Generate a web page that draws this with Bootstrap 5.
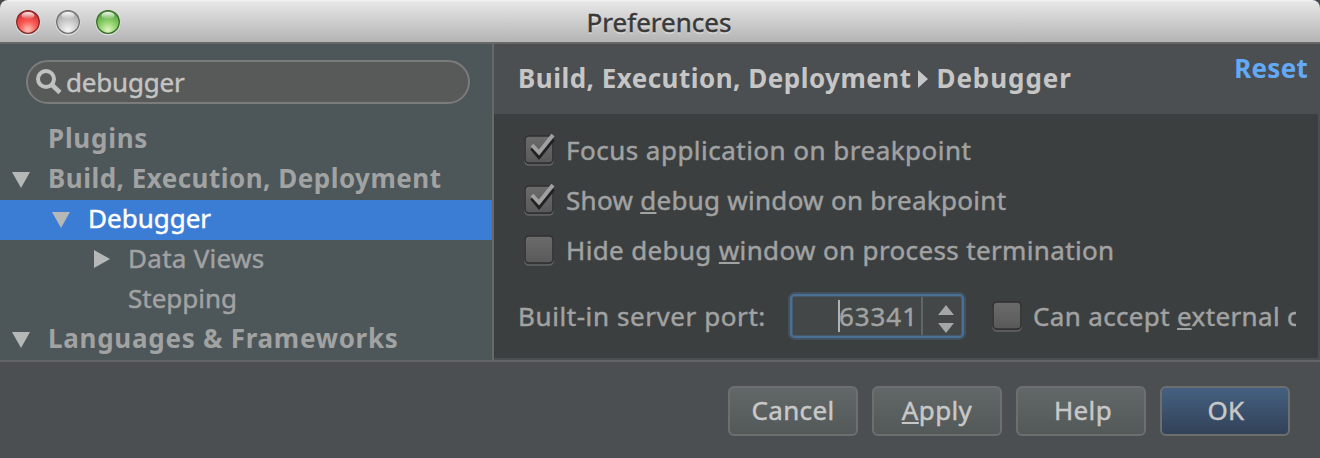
<!DOCTYPE html>
<html lang="en">
<head>
<meta charset="utf-8">
<title>Preferences</title>
<link href="https://cdn.jsdelivr.net/npm/bootstrap@5.3.0/dist/css/bootstrap.min.css" rel="stylesheet">
<style>
body{font-family:"Noto Sans","Open Sans",sans-serif;font-size:26px;line-height:40px;color:#a1a2a2;background:#48494c;width:1320px;height:458px;overflow:hidden;white-space:nowrap;-webkit-text-stroke:.45px currentColor}
svg{display:block;flex:none}
.window{height:458px;background:#4b4f51;border-radius:8px 8px 0 0;overflow:hidden}
.titlebar{height:44px;background:linear-gradient(#f6f6f6 0,#e6e6e6 2px,#b4b4b4 42px);border-bottom:2px solid #686868;color:#393939;text-shadow:0 2px 0 rgba(255,255,255,.35);padding:2px 2px 0 0}
.lights{left:14px;top:8px}
.main-area{height:318px;border-bottom:2px solid #626465}
.sidebar{width:494px;flex:none;background:#4d5659;border-right:2px solid #66686a}
.search{margin:16px 22px 16px 26px;height:44px;border:2px solid #7b7c7b;border-radius:22px;background:#575a59;color:#c3c4c4;padding-left:8px}
.search span{padding-left:4px;letter-spacing:-.2px}
.node{height:40px;line-height:36px}
.node svg{width:36px;height:40px;fill:#b6b7b7}
.sel{background:#3b7cd4;color:#fff}
.lv1{padding-left:12px}.lv2{padding-left:52px}.lv3{padding-left:92px}
.crumb{height:70px;padding:14px 12px 0 24px;color:#c6c6c6}
.crumb svg{margin:12px 8px 0 7px;fill:#c6c6c6}
.reset{color:#62aaf8;margin-top:-10px}
.panel{height:244px;background:#3c3f40;margin-right:2px;padding:11px 22px 0 24px;overflow:hidden}
.clipped{width:778px;overflow:hidden}
.opt{height:50px;padding-left:6px}
.opt span{padding-left:12px}
.box{width:30px;height:32px;overflow:visible;position:relative;top:1px}
.port{margin-top:16px;height:50px}
.spin{width:174px;height:44px;border:2px solid #4a7195;border-radius:5px;background:#434747;box-shadow:0 0 0 2px #43525f,inset 0 0 0 1px #44596b;flex:none}
.spin span{margin-left:-1px}
.port .opt{margin-left:22px}
.port .opt span{padding-left:11px}
.caret{width:2px;height:32px;background:#b2b2b2;margin-left:46px;margin-top:-1px;flex:none}
.sep{width:2px;height:38px;background:#636465;margin-left:3px;flex:none}
u{text-decoration:underline 2px;text-underline-offset:2px;text-decoration-skip-ink:none}
.pbtn{width:130px;height:50px;border:2px solid #6c6e6f;border-radius:6px;background:linear-gradient(#626868,#535859);color:#c8c8c8;text-align:center;font:inherit;letter-spacing:.35px;line-height:44px;padding:0 0 2px;-webkit-text-stroke:inherit}
.pbtn.help{padding-left:4px}
.pbtn.ok{background:linear-gradient(#446080,#324258);padding-left:2px}
.actions{padding:24px 30px 0 0;gap:14px}
.fw-bold{-webkit-text-stroke:0}
.ls2{letter-spacing:.28px}.ls4{letter-spacing:.36px}.ls5{letter-spacing:.48px}.ls6{letter-spacing:.58px}.ls7{letter-spacing:.73px}.ls9{letter-spacing:.95px}
</style>
</head>
<body>
<svg width="0" height="0" class="position-absolute">
<defs>
<linearGradient id="boxFill" x2="0" y2="1"><stop stop-color="#6b6b6b"/><stop offset="1" stop-color="#595959"/></linearGradient>
<radialGradient id="red" cy=".85" r=".85"><stop stop-color="#ffc4ba"/><stop offset=".45" stop-color="#fb5a53"/><stop offset="1" stop-color="#c8282c"/></radialGradient>
<radialGradient id="grey" cy=".85" r=".85"><stop stop-color="#f6f6f6"/><stop offset=".45" stop-color="#cdcdcd"/><stop offset="1" stop-color="#a0a0a0"/></radialGradient>
<radialGradient id="green" cy=".85" r=".85"><stop stop-color="#e0f8c0"/><stop offset=".45" stop-color="#8fd06c"/><stop offset="1" stop-color="#4c9a3a"/></radialGradient>
<linearGradient id="shine" x2="0" y2="1"><stop stop-color="#fff" stop-opacity=".95"/><stop offset="1" stop-color="#fff" stop-opacity=".05"/></linearGradient>
<symbol id="box" viewBox="0 0 30 32" overflow="visible">
<rect x="1" y="3" width="28" height="27" rx="4" fill="none" stroke="#626565" stroke-width="1.6"/>
<rect x="1" y="1" width="28" height="27" rx="4" fill="url(#boxFill)" stroke="#303132" stroke-width="1.6"/>
</symbol>
<symbol id="tick" viewBox="0 0 30 32" overflow="visible">
<path d="M8 13l7 8.500L29 4" fill="none" stroke="#202122" stroke-width="4.500"/>
<path d="M8 10l7 7.500L29 0" fill="none" stroke="#a0a0a0" stroke-width="4"/>
</symbol>
</defs>
</svg>
<div class="window">
<header class="titlebar position-relative text-center">
<svg class="position-absolute lights" width="110" height="30">
<g fill="none" stroke="#fff" stroke-opacity=".6"><circle cx="14" cy="15" r="12"/><circle cx="54" cy="15" r="12"/><circle cx="94" cy="15" r="12"/></g>
<circle cx="14" cy="14" r="11.300" fill="url(#red)" stroke="#82282a" stroke-width="1.300"/>
<circle cx="54" cy="14" r="11.300" fill="url(#grey)" stroke="#707070" stroke-width="1.300"/>
<circle cx="94" cy="14" r="11.300" fill="url(#green)" stroke="#376d2a" stroke-width="1.300"/>
<g fill="url(#shine)"><ellipse cx="14" cy="7.500" rx="6.500" ry="3.500"/><ellipse cx="54" cy="7.500" rx="6.500" ry="3.500"/><ellipse cx="94" cy="7.500" rx="6.500" ry="3.500"/></g>
</svg>
<span>Preferences</span>
</header>
<div class="d-flex main-area">
<aside class="sidebar">
<div class="search d-flex align-items-center"><svg width="26" height="26" fill="none" stroke="#c0c1c1"><circle cx="10" cy="10" r="8" stroke-width="4"/><path d="M15.500 15.500l8.500 8" stroke-width="4.500"/></svg><span>debugger</span></div>
<div class="node lv1 d-flex fw-bold"><svg></svg><span class="ls7">Plugins</span></div>
<div class="node lv1 d-flex fw-bold"><svg><path d="M0 12h18l-9 16z"/></svg><span class="ls5">Build, Execution, Deployment</span></div>
<div class="node lv2 d-flex sel"><svg><path d="M0 12h18l-9 16z"/></svg><span>Debugger</span></div>
<div class="node lv3 d-flex"><svg><path d="M2 10v18l16-9z"/></svg><span class="ls2">Data Views</span></div>
<div class="node lv3 d-flex"><svg></svg><span>Stepping</span></div>
<div class="node lv1 d-flex fw-bold"><svg><path d="M0 12h18l-9 16z"/></svg><span class="ls7">Languages &amp; Frameworks</span></div>
</aside>
<section class="flex-grow-1">
<div class="crumb d-flex fw-bold"><span class="ls5">Build, Execution, Deployment</span><svg width="10" height="18"><path d="M0 0v18l10-9z"/></svg><span class="ls9">Debugger</span><span class="reset ms-auto ls2">Reset</span></div>
<div class="panel">
<div class="opt d-flex align-items-center"><svg class="box"><use href="#box"/><use href="#tick"/></svg><span class="ls5">Focus application on breakpoint</span></div>
<div class="opt d-flex align-items-center"><svg class="box"><use href="#box"/><use href="#tick"/></svg><span class="ls2">Show <u>d</u>ebug window on breakpoint</span></div>
<div class="opt d-flex align-items-center"><svg class="box"><use href="#box"/></svg><span class="ls4">Hide debug <u>w</u>indow on process termination</span></div>
<div class="port clipped d-flex align-items-center"><span class="ls6">Built-in server port:</span>
<div class="spin d-flex align-items-center ms-4"><div class="caret"></div><span class="ls9">63341</span><div class="sep"></div><svg width="40" height="40" fill="#a5a6a6"><path d="M15 19l8-10 8 10zM15 27h16l-8 10z"/></svg></div>
<div class="opt d-flex align-items-center flex-shrink-0"><svg class="box"><use href="#box"/></svg><span class="ls4">Can accept <u>e</u>xternal c</span></div></div>
</div>
</section>
</div>
<footer class="actions d-flex justify-content-end"><button class="pbtn">Cancel</button><button class="pbtn"><u>A</u>pply</button><button class="pbtn help">Help</button><button class="pbtn ok">OK</button></footer>
</div>
<script src="https://cdn.jsdelivr.net/npm/bootstrap@5.3.0/dist/js/bootstrap.bundle.min.js"></script>
</body>
</html>
